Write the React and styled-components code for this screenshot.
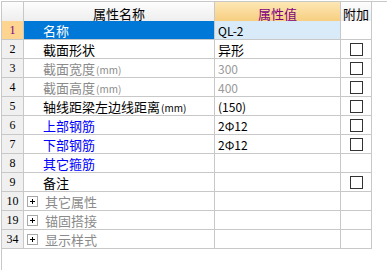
import React from 'react';
import styled, { createGlobalStyle } from 'styled-components';

const GlobalStyle = createGlobalStyle`
	html, body {
		margin: 0;
		padding: 0;
		background: #ffffff;
	}
	body {
		font-family: "Noto Sans CJK SC", "Liberation Sans", sans-serif;
		font-size: 13px;
	}
`;

const Frame = styled.div`
	margin: 1px 0 0 1px;
	height: 268px;
	border-top: 1px solid #c8c8c8;
	border-left: 1px solid #c8c8c8;
`;

const Grid = styled.div`
	display: grid;
	grid-template-columns: 22px 191px 126px 31px;
	grid-auto-rows: 19px;
	width: 370px;
`;

const HeadCell = styled.div`
	height: 23px;
	display: flex;
	align-items: center;
	justify-content: center;
	border-right: 1px solid #c8c8c8;
	border-bottom: 1px solid #c8c8c8;
	background: ${p => (p.$accent
		? 'linear-gradient(#fde7b4, #f6c976)'
		: 'linear-gradient(#fdfdfd, #ebebeb)')};
	color: ${p => (p.$accent ? '#800080' : '#000000')};
	line-height: 1;
`;

const NumCell = styled.div`
	display: flex;
	align-items: center;
	justify-content: center;
	border-right: 1px solid #c8c8c8;
	border-bottom: 1px solid #c8c8c8;
	background: ${p => (p.$active ? '#fdd590' : '#f0f0f0')};
	color: ${p => (p.$active ? '#800080' : '#000000')};
	font-family: "Liberation Serif", serif;
	font-size: 12px;
`;

const NameCell = styled.div`
	display: flex;
	align-items: center;
	padding-left: ${p => (p.$group ? '2px' : '19px')};
	gap: 7px;
	border-right: 1px solid #c8c8c8;
	border-bottom: 1px solid #c8c8c8;
	background: ${p => (p.$active ? '#0078d7' : '#ffffff')};
	color: ${p => (p.$active ? '#ffffff' : p.$tone)};
	white-space: nowrap;
	overflow: hidden;
`;

const Unit = styled.span`
	font-size: 10px;
	margin-left: 1px;
`;

const ValueCell = styled.div`
	display: flex;
	align-items: center;
	padding-left: 3px;
	border-right: 1px solid #c8c8c8;
	border-bottom: 1px solid #c8c8c8;
	background: ${p => (p.$active ? '#d9eaf8' : '#ffffff')};
	color: ${p => (p.$muted ? '#9a9a9a' : '#000000')};
	font-size: ${p => (p.$latin ? '12px' : '13px')};
	white-space: nowrap;
`;

const AddCell = styled.div`
	display: flex;
	align-items: center;
	justify-content: center;
	border-right: 1px solid #c8c8c8;
	border-bottom: 1px solid #c8c8c8;
	background: #ffffff;
`;

const Check = styled.span`
	width: 11px;
	height: 11px;
	border: 1px solid #333333;
	background: #ffffff;
`;

const Expander = styled.span`
	position: relative;
	width: 9px;
	height: 9px;
	margin-left: 1px;
	border: 1px solid #a8a8a8;
	flex-shrink: 0;

	&::before, &::after {
		content: '';
		position: absolute;
		background: #000000;
	}
	&::before {
		left: 2px;
		top: 4px;
		width: 5px;
		height: 1px;
	}
	&::after {
		left: 4px;
		top: 2px;
		width: 1px;
		height: 5px;
	}
`;

const rows = [
	{ no: 1, name: '名称', value: 'QL-2', active: true, latin: true },
	{ no: 2, name: '截面形状', value: '异形', check: true },
	{ no: 3, name: '截面宽度', unit: '(mm)', value: '300', tone: '#8a8a8a', muted: true, check: true, latin: true },
	{ no: 4, name: '截面高度', unit: '(mm)', value: '400', tone: '#8a8a8a', muted: true, check: true, latin: true },
	{ no: 5, name: '轴线距梁左边线距离', unit: '(mm)', value: '(150)', check: true, latin: true },
	{ no: 6, name: '上部钢筋', value: '2Φ12', tone: '#0000ff', check: true, latin: true },
	{ no: 7, name: '下部钢筋', value: '2Φ12', tone: '#0000ff', check: true, latin: true },
	{ no: 8, name: '其它箍筋', value: '', tone: '#0000ff' },
	{ no: 9, name: '备注', value: '', check: true },
	{ no: 10, name: '其它属性', value: '', tone: '#8a8a8a', group: true },
	{ no: 19, name: '锚固搭接', value: '', tone: '#8a8a8a', group: true },
	{ no: 34, name: '显示样式', value: '', tone: '#8a8a8a', group: true },
];

const App = () => {
	return (
		<>
			<GlobalStyle />
			<Frame>
				<Grid>
					<HeadCell />
					<HeadCell>属性名称</HeadCell>
					<HeadCell $accent>属性值</HeadCell>
					<HeadCell>附加</HeadCell>
					{rows.map(row => (
						<React.Fragment key={row.no}>
							<NumCell $active={row.active}>{row.no}</NumCell>
							<NameCell $active={row.active} $group={row.group} $tone={row.tone || '#000000'}>
								{row.group && <Expander />}
								<span>
									{row.name}
									{row.unit && <Unit>{row.unit}</Unit>}
								</span>
							</NameCell>
							<ValueCell $active={row.active} $muted={row.muted} $latin={row.latin}>
								{row.value}
							</ValueCell>
							<AddCell>{row.check && <Check />}</AddCell>
						</React.Fragment>
					))}
				</Grid>
			</Frame>
		</>
	);
};

export default App;
